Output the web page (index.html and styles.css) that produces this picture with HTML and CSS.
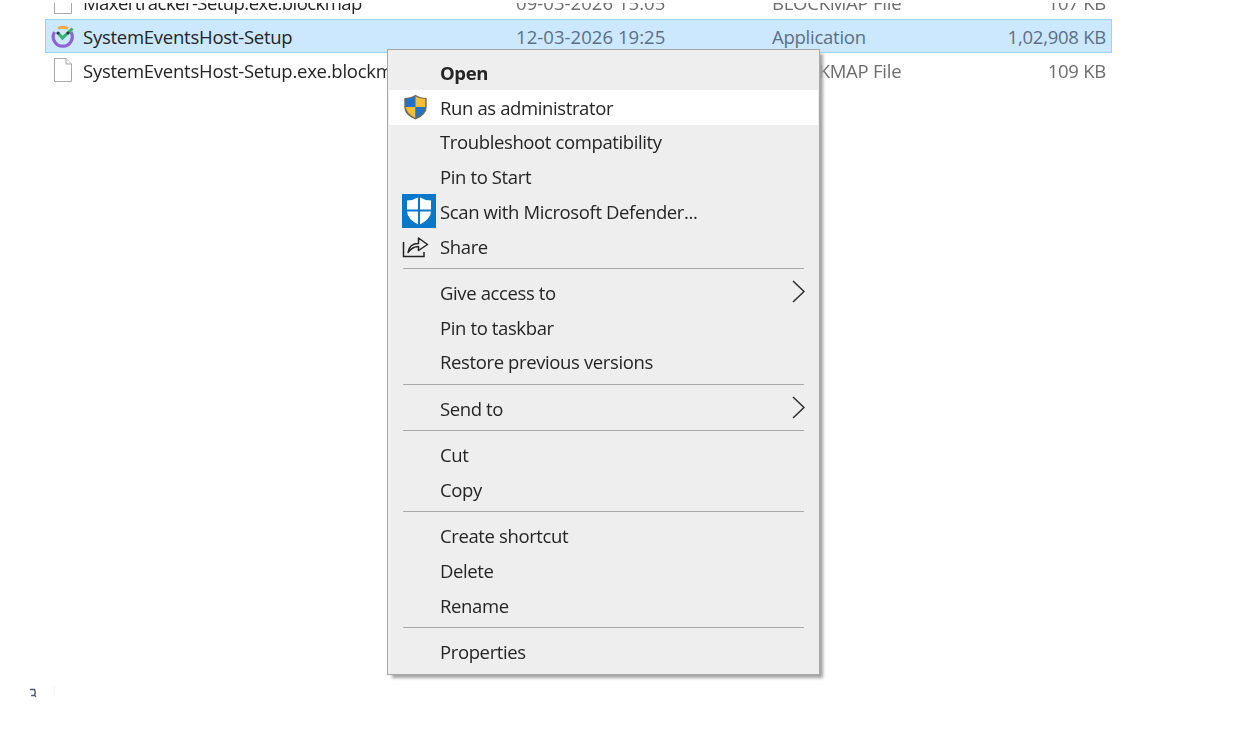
FILE: index.html
```html
<!DOCTYPE html>
<html lang="en">
<head>
<meta charset="utf-8">
<title>File context menu</title>
<link rel="stylesheet" href="styles.css">
</head>
<body>
<div class="list">
  <div class="row">
    <svg class="fi" viewBox="0 0 20 24"><path d="M1.5 .5H13L18.5 6V23.5H1.5Z" fill="#fff" stroke="#a9a9a9"/><path d="M13 .5V6H18.5" fill="#f2f2f2" stroke="#a9a9a9"/></svg>
    <span class="name tight">Maxertracker-Setup.exe.blockmap</span><span class="date">09-03-2026 15:05</span><span class="type">BLOCKMAP File</span><span class="size">107 KB</span>
  </div>
  <div class="row selected">
    <svg class="fi" viewBox="0 0 24 24"><path d="M7 3.500Q12 1 17 3.500" fill="none" stroke="#f0a94a" stroke-width="2.800"/><path d="M3.500 7A9.500 9.500 0 1 0 20 7" fill="none" stroke="#8f62d6" stroke-width="3.200"/><path d="M7 8L11.500 13L21.500 3.500" fill="none" stroke="#35b26b" stroke-width="3"/><circle cx="7" cy="8" r="1.600" fill="#27413a"/><circle cx="17" cy="8" r="1.600" fill="#27413a"/></svg>
    <span class="name">SystemEventsHost-Setup</span><span class="date">12-03-2026 19:25</span><span class="type">Application</span><span class="size">1,02,908 KB</span>
  </div>
  <div class="row">
    <svg class="fi" viewBox="0 0 20 24"><path d="M1.5 .5H13L18.5 6V23.5H1.5Z" fill="#fff" stroke="#a9a9a9"/><path d="M13 .5V6H18.5" fill="#f2f2f2" stroke="#a9a9a9"/></svg>
    <span class="name">SystemEventsHost-Setup.exe.blockmap</span><span class="date">12-03-2026 19:25</span><span class="type">BLOCKMAP File</span><span class="size">109 KB</span>
  </div>
</div>
<div class="topmask"></div>

<div class="menu">
  <div class="item bold"><span class="label">Open</span></div>
  <div class="item hover">
    <svg class="uac" viewBox="0 0 24 26"><path d="M12 .8Q17 4 23.2 4V13Q23.2 21 12 25.6Q.8 21 .8 13V4Q7 4 12 .8Z" fill="#6f6a55"/><path d="M12 2.400V13H2.200V4.900Q7.500 4.800 12 2.400Z" fill="#1f74c4"/><path d="M12 2.400Q16.500 4.800 21.800 4.900V13H12Z" fill="#f3bd35"/><path d="M2.200 13H12V24Q3.400 20.300 2.200 13Z" fill="#f3bd35"/><path d="M12 13H21.800Q20.600 20.300 12 24Z" fill="#1f74c4"/></svg>
    <span class="label">Run as administrator</span>
  </div>
  <div class="item"><span class="label">Troubleshoot compatibility</span></div>
  <div class="item"><span class="label">Pin to Start</span></div>
  <div class="item">
    <svg class="defender" viewBox="0 0 34 34"><rect width="34" height="34" fill="#0a78c9"/><path d="M17 3Q23 6.500 29 6.500V17Q29 25 17 31Q5 25 5 17V6.500Q11 6.500 17 3Z" fill="#fff"/><path d="M17 3V31M5 16.500H29" stroke="#0a78c9" stroke-width="2"/></svg>
    <span class="label">Scan with Microsoft Defender...</span>
  </div>
  <div class="item">
    <svg class="share" viewBox="0 0 26 24"><path d="M1 8V22.500H21.500V18" fill="none" stroke="#222" stroke-width="1.500"/><path d="M5.500 18.500C6.500 12 10.500 9.500 16 9.500V4L25 10.500L16 16.500V12.500C11.500 12.500 8.500 14.500 5.500 18.500Z" fill="none" stroke="#222" stroke-width="1.500" stroke-linejoin="round"/></svg>
    <span class="label">Share</span>
  </div>
  <div class="sep"></div>
  <div class="item"><span class="label">Give access to</span><svg class="chev" viewBox="0 0 13 23"><path d="M1 1L12 11.500L1 22" fill="none" stroke="#2a2a2a" stroke-width="1.500"/></svg></div>
  <div class="item"><span class="label">Pin to taskbar</span></div>
  <div class="item"><span class="label">Restore previous versions</span></div>
  <div class="sep"></div>
  <div class="item"><span class="label">Send to</span><svg class="chev" viewBox="0 0 13 23"><path d="M1 1L12 11.500L1 22" fill="none" stroke="#2a2a2a" stroke-width="1.500"/></svg></div>
  <div class="sep"></div>
  <div class="item"><span class="label">Cut</span></div>
  <div class="item"><span class="label">Copy</span></div>
  <div class="sep"></div>
  <div class="item"><span class="label">Create shortcut</span></div>
  <div class="item"><span class="label">Delete</span></div>
  <div class="item"><span class="label">Rename</span></div>
  <div class="sep"></div>
  <div class="item"><span class="label">Properties</span></div>
</div>

<svg class="stray" viewBox="0 0 28 12"><path d="M1 2.500H5.500Q7 5 5.500 8.500H2M6 8.500L7 10" fill="none" stroke="#4a5a70" stroke-width="1.300"/><path d="M25 0V9" stroke="#eef0f2" stroke-width="1"/></svg>
</body>
</html>
```
FILE: styles.css
```css
* { box-sizing: border-box; }
html, body { margin: 0; height: 100%; }
html { background: #fff; }
body {
  width: 1240px;
  height: 734px;
  overflow: hidden;
  position: relative;
  font-family: "Open Sans", "Noto Sans", "Liberation Sans", sans-serif;
  color: #252525;
  filter: blur(.35px);
}
.list {
  margin: -15px 0 0 45px;
  width: 1067px;
}
.row {
  display: grid;
  grid-template-columns: 38px 432px 256px 334px;
  align-items: center;
  position: relative;
  height: 34px;
  font-size: 18.500px;
  letter-spacing: -.25px;
  border: 1px solid transparent;
}
.row.selected {
  background: #cce8ff;
  border-color: #99d1ff;
}
.fi {
  position: absolute;
  left: 7px;
  top: 4px;
  width: 20px;
  height: 24px;
}
.row.selected .fi {
  left: 5px;
  top: 5px;
  width: 24px;
}
.name {
  grid-column: 1 / 3;
  grid-row: 1;
  margin-left: 37px;
  white-space: nowrap;
}
.name.tight { letter-spacing: -.55px; }
.date, .type, .size {
  grid-row: 1;
  color: #6d6d6d;
}
.date {
  grid-column: 3;
  letter-spacing: .05px;
}
.type { grid-column: 4; }
.size {
  grid-column: 4;
  justify-self: end;
}
.selected .date, .selected .type, .selected .size { color: #5b7085; }
.topmask {
  position: absolute;
  left: 0;
  top: 0;
  width: 100%;
  height: 3px;
  background: #fff;
}

.menu {
  position: absolute;
  left: 386.500px;
  top: 49px;
  width: 433.500px;
  height: 626px;
  background: #eeeeee;
  border: 1px solid #a8a8a8;
  padding: 5px 1px 0;
  box-shadow: 4px 4px 3px -1px #a3a3a3;
  font-size: 18.500px;
  letter-spacing: -.38px;
}
.item {
  position: relative;
  display: flex;
  align-items: center;
  height: 34.750px;
  padding-left: 51.500px;
  white-space: nowrap;
}
.item.bold { font-weight: 700; }
.item.hover { background: #fff; }
.sep {
  height: 1.500px;
  margin: 4.200px 14px 5.900px 14px;
  background: #a9a9a9;
}
.uac {
  position: absolute;
  left: 14px;
  top: 4px;
  width: 25px;
  height: 26px;
}
.defender {
  position: absolute;
  left: 13.500px;
  top: 0;
  width: 34px;
  height: 34px;
}
.share {
  position: absolute;
  left: 13px;
  top: 5px;
  width: 27px;
  height: 24px;
}
.chev {
  position: absolute;
  left: 403.500px;
  top: 5px;
  width: 13px;
  height: 23px;
}
.stray {
  position: absolute;
  left: 29px;
  top: 687px;
  width: 28px;
  height: 12px;
}
```
